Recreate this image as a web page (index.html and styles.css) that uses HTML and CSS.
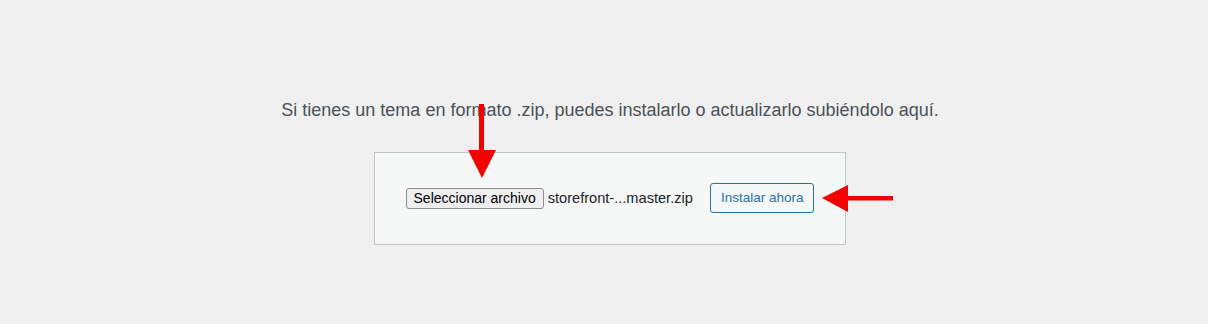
FILE: index.html
```html
<!DOCTYPE html>
<html lang="es">
<head>
<meta charset="utf-8">
<title>Subir tema</title>
<link rel="stylesheet" href="styles.css">
</head>
<body>
<div class="page">
  <div class="upload-theme">
    <p class="install-help">Si tienes un tema en formato .zip, puedes instalarlo o actualizarlo subiéndolo aquí.</p>
    <form class="wp-upload-form">
      <span class="file-input">
        <button type="button" class="file-btn">Seleccionar archivo</button>
        <span class="file-name">storefront-...master.zip</span>
      </span>
      <button type="button" class="button">Instalar ahora</button>
    </form>
  </div>
  <svg class="arrows" width="1208" height="324" viewBox="0 0 1208 324" aria-hidden="true">
    <rect x="479" y="104" width="5" height="48" fill="#f20000"/>
    <polygon points="468,150 496,150 482,178" fill="#f20000"/>
    <rect x="846" y="196" width="47" height="4.5" fill="#f20000"/>
    <polygon points="848,185 848,212 822,198" fill="#f20000"/>
  </svg>
</div>
</body>
</html>
```

FILE: styles.css
```css
html, body {
  margin: 0;
  padding: 0;
  background: #f0f0f1;
}

.page {
  position: relative;
  width: 1208px;
  height: 324px;
  box-sizing: border-box;
  padding-left: 12px;
  font-family: "Liberation Sans", Arial, sans-serif;
}

.upload-theme {
  text-align: center;
}

.install-help {
  margin: 0;
  padding: 99px 0 31px;
  font-size: 18px;
  line-height: 22px;
  color: #4b5157;
}

.wp-upload-form {
  display: inline-flex;
  align-items: center;
  padding: 30px 31px 31px 30px;
  margin: 0;
  border: 1px solid #c3c4c7;
  background: #f6f7f7;
}

.file-input {
  display: inline-flex;
  align-items: center;
  margin-left: 1px;
}

.file-btn {
  height: 21px;
  padding: 0 7px;
  margin: 0;
  border: 1px solid #8f8f8f;
  border-radius: 3px;
  background: #efefef;
  color: #000;
  font-family: "Liberation Sans", Arial, sans-serif;
  font-size: 14px;
  line-height: 19px;
}

.file-name {
  margin-left: 4px;
  font-size: 14.6px;
  color: #1d2327;
}

.button {
  margin-left: 17px;
  height: 30px;
  padding: 0 10px;
  border: 1px solid #2271b1;
  border-radius: 3px;
  background: #f6f7f7;
  color: #2271b1;
  font-family: "Liberation Sans", Arial, sans-serif;
  font-size: 13.5px;
  line-height: 28px;
}

.arrows {
  position: absolute;
  left: 0;
  top: 0;
  pointer-events: none;
}
```
